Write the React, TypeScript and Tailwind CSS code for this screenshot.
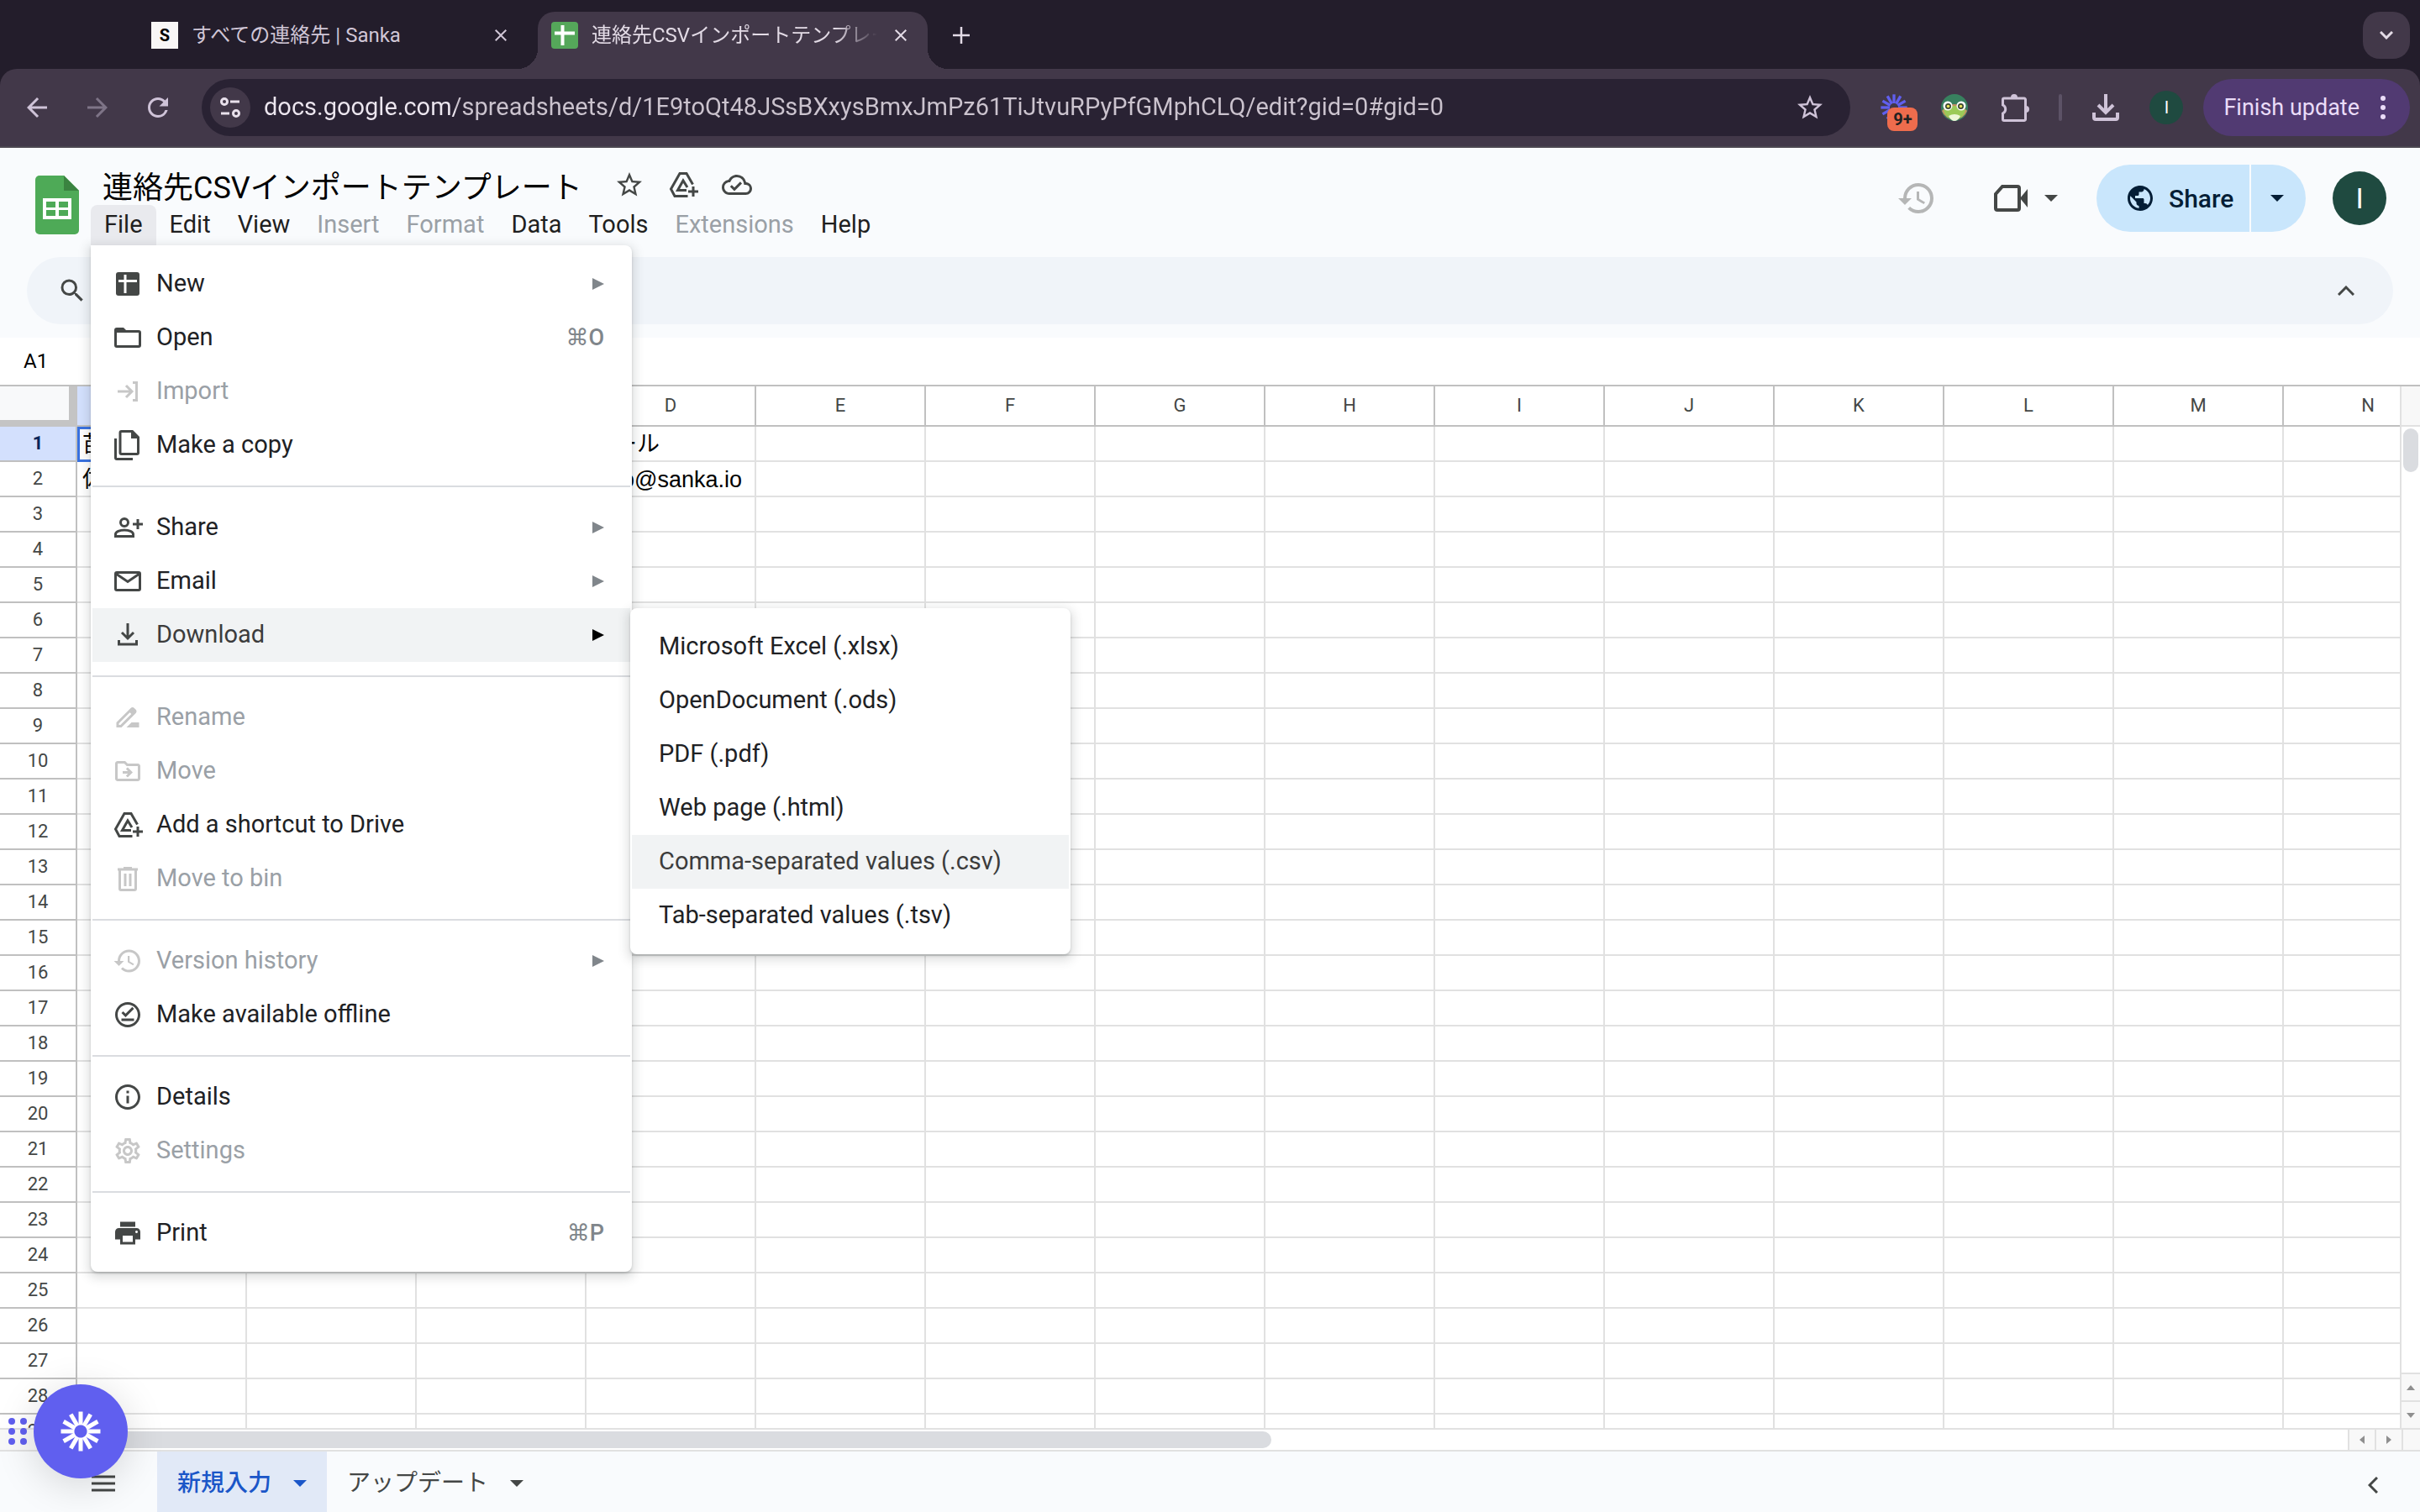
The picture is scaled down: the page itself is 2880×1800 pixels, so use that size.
import type { ReactNode } from 'react'
import {
  MdArrowBack,
  MdArrowForward,
  MdClose,
  MdDriveFileRenameOutline,
  MdHistory,
  MdInfoOutline,
  MdOutlineCloudDone,
  MdOutlineDriveFileMove,
  MdOutlineOfflinePin,
  MdOutlineSettings,
  MdPrint,
  MdPublic,
  MdRefresh,
  MdSearch,
  MdStarBorder,
} from 'react-icons/md'

const columns = ['A', 'B', 'C', 'D', 'E', 'F', 'G', 'H', 'I', 'J', 'K', 'L', 'M', 'N']
const rows = Array.from({ length: 29 }, (_, i) => i + 1)

const cells: Record<string, string> = {
  A1: '苗字',
  D1: 'メール',
  A2: '佐藤',
  D2: 'sato@sanka.io',
}

const menus = [
  { label: 'File', open: true },
  { label: 'Edit' },
  { label: 'View' },
  { label: 'Insert', disabled: true },
  { label: 'Format', disabled: true },
  { label: 'Data' },
  { label: 'Tools' },
  { label: 'Extensions', disabled: true },
  { label: 'Help' },
]

type Item = {
  label: string
  icon: ReactNode
  disabled?: boolean
  active?: boolean
  arrow?: boolean
  shortcut?: string
}

function Glyph({ children }: { children: ReactNode }) {
  return (
    <svg viewBox="0 0 36 36" className="size-9" fill="none" stroke="currentColor" strokeWidth="3">
      {children}
    </svg>
  )
}

function AddToDrive() {
  return (
    <Glyph>
      <path d="M29.500 17.500L22 4.500H14L3.500 23l4.500 8.500h15.500" />
      <path d="M22 24.500H11.500L18 13l5 8M24 26h12M30 20v12" />
    </Glyph>
  )
}

function Bin() {
  return (
    <Glyph>
      <path d="M8.500 8v22a1.500 1.500 0 0 0 1.500 1.500h16a1.500 1.500 0 0 0 1.500-1.500V8M6 7h24M13 5.500h10M15 12v15M21 12v15" />
    </Glyph>
  )
}

const fileMenu: Item[][] = [
  [
    {
      label: 'New',
      arrow: true,
      icon: (
        <Glyph>
          <rect x="4" y="4" width="28" height="28" rx="3" fill="currentColor" stroke="none" />
          <path d="M15 7v22M7 14.500h22" stroke="white" />
        </Glyph>
      ),
    },
    {
      label: 'Open',
      shortcut: '⌘O',
      icon: (
        <Glyph>
          <path d="M3.500 9v18a1.500 1.500 0 0 0 1.500 1.500h26a1.500 1.500 0 0 0 1.500-1.500V12a1.500 1.500 0 0 0-1.500-1.500H3.500" />
          <path d="M2 12V9a3 3 0 0 1 3-3h8l4 4v2z" fill="currentColor" stroke="none" />
        </Glyph>
      ),
    },
    {
      label: 'Import',
      disabled: true,
      icon: (
        <Glyph>
          <path d="M6 18h16M16 11l7 7-7 7M24 7.500h4.500v21H24" />
        </Glyph>
      ),
    },
    {
      label: 'Make a copy',
      icon: (
        <Glyph>
          <path d="M10.500 1.500h13l7 7V27a1.500 1.500 0 0 1-1.500 1.500H10.500A1.500 1.500 0 0 1 9 27V3a1.500 1.500 0 0 1 1.500-1.500z" />
          <path d="M22 0v10h10z" fill="currentColor" stroke="none" />
          <path d="M3.500 10v23a1.500 1.500 0 0 0 1.500 1.500h19" />
        </Glyph>
      ),
    },
  ],
  [
    {
      label: 'Share',
      arrow: true,
      icon: (
        <Glyph>
          <circle cx="14" cy="12" r="4.500" />
          <path d="M3.500 28.500v-2.500c0-3 5-5 10.500-5s10.500 2 10.500 5v2.500zM24 14h12M30 8v12" />
        </Glyph>
      ),
    },
    {
      label: 'Email',
      arrow: true,
      icon: (
        <Glyph>
          <rect x="3.500" y="7.500" width="29" height="21" rx="1.500" />
          <path d="M4 9l14 9.500L32 9" />
        </Glyph>
      ),
    },
    {
      label: 'Download',
      arrow: true,
      active: true,
      icon: (
        <Glyph>
          <path d="M18 4v17M11 15l7 7 7-7M7.500 24v5h21v-5" />
        </Glyph>
      ),
    },
  ],
  [
    { label: 'Rename', disabled: true, icon: <MdDriveFileRenameOutline className="size-9" /> },
    { label: 'Move', disabled: true, icon: <MdOutlineDriveFileMove className="size-9" /> },
    { label: 'Add a shortcut to Drive', icon: <AddToDrive /> },
    { label: 'Move to bin', disabled: true, icon: <Bin /> },
  ],
  [
    { label: 'Version history', disabled: true, arrow: true, icon: <MdHistory className="size-9" /> },
    { label: 'Make available offline', icon: <MdOutlineOfflinePin className="size-[38px]" /> },
  ],
  [
    { label: 'Details', icon: <MdInfoOutline className="size-[38px]" /> },
    { label: 'Settings', disabled: true, icon: <MdOutlineSettings className="size-[38px]" /> },
  ],
  [{ label: 'Print', shortcut: '⌘P', icon: <MdPrint className="size-[38px]" /> }],
]

const downloadMenu = [
  'Microsoft Excel (.xlsx)',
  'OpenDocument (.ods)',
  'PDF (.pdf)',
  'Web page (.html)',
  'Comma-separated values (.csv)',
  'Tab-separated values (.tsv)',
]

function Caret() {
  return (
    <svg viewBox="0 0 16 8" className="h-2 w-4" fill="currentColor">
      <path d="M0 0h16L8 8z" />
    </svg>
  )
}

function Burst({ className }: { className: string }) {
  return (
    <svg viewBox="-24 -24 48 48" className={className} stroke="currentColor" strokeWidth="5">
      {Array.from({ length: 12 }, (_, i) => (
        <path key={i} d="M0-7.500V-23.500" transform={`rotate(${i * 30})`} />
      ))}
    </svg>
  )
}

function SheetsLogo() {
  return (
    <svg viewBox="0 0 52 70" className="h-[70px] w-[52px]">
      <path d="M5 0h29l18 18v47a5 5 0 0 1-5 5H5a5 5 0 0 1-5-5V5a5 5 0 0 1 5-5z" fill="#4eaa57" />
      <path d="M34 0l18 18H34z" fill="#3a8340" />
      <path d="M9 27h34v25H9z" fill="white" />
      <path d="M13 31h11v7H13zM28 31h11v7H28zM13 41h11v7H13zM28 41h11v7H28z" fill="#4eaa57" />
    </svg>
  )
}

function Frog() {
  return (
    <svg viewBox="0 0 32 32" className="size-8">
      <circle cx="16" cy="16" r="16" fill="#38815f" />
      <path d="M1 20q15-16 30 0a16 16 0 0 1-30 0z" fill="#c98f62" />
      <path d="M3 19q13-10 26 0c-1 6-5 11-13 11S4 25 3 19z" fill="#9bca58" />
      <path d="M9 26q7-4 14 0-3 6-7 6t-7-6z" fill="#edf7d8" />
      <circle cx="8" cy="14" r="5.500" fill="white" />
      <circle cx="24" cy="14" r="5.500" fill="white" />
      <circle cx="8.500" cy="14.500" r="3.500" fill="#3c4a32" />
      <circle cx="23.500" cy="14.500" r="3.500" fill="#3c4a32" />
      <circle cx="8.500" cy="14.500" r="1.800" fill="#e8e25a" />
      <circle cx="23.500" cy="14.500" r="1.800" fill="#e8e25a" />
    </svg>
  )
}

function TabStrip() {
  return (
    <div className="flex h-[82px] items-end bg-[#231d2b] pl-[164px] text-2xl text-[#e3dbe6]">
      <div className="flex h-[68px] w-[464px] items-center gap-4 pb-3 pl-4 pr-5 text-[#d0c6d6]">
        <span className="flex size-8 items-center justify-center bg-[#f8f6f6] text-xl font-bold text-black">S</span>
        <span className="min-w-0 flex-1 truncate">すべての連絡先 | Sanka</span>
        <button aria-label="Close tab">
          <MdClose className="size-6" />
        </button>
      </div>
      <div className="relative ml-3 flex h-[68px] w-[464px] items-center gap-4 rounded-t-[20px] bg-[#423849] pb-3 pl-4 pr-5">
        <span className="absolute -left-6 bottom-0 size-6 bg-[radial-gradient(circle_at_0_0,transparent_24px,#423849_24px)]" />
        <span className="absolute -right-6 bottom-0 size-6 bg-[radial-gradient(circle_at_100%_0,transparent_24px,#423849_24px)]" />
        <svg viewBox="0 0 32 32" className="size-8 shrink-0">
          <rect width="32" height="32" rx="4" fill="#55a75a" />
          <path d="M13.500 4v24M4 13.500h24" stroke="white" strokeWidth="4" />
        </svg>
        <span className="min-w-0 flex-1 overflow-hidden whitespace-nowrap [mask-image:linear-gradient(90deg,black_85%,transparent)]">
          連絡先CSVインポートテンプレート
        </span>
        <button aria-label="Close tab">
          <MdClose className="size-6" />
        </button>
      </div>
      <button aria-label="New tab" className="ml-3 flex h-[68px] w-14 items-center justify-center pb-3">
        <svg viewBox="0 0 24 24" className="size-6" stroke="currentColor" strokeWidth="2.500">
          <path d="M12 2v20M2 12h20" />
        </svg>
      </button>
      <button aria-label="Search tabs" className="mb-3 ml-auto mr-3 flex size-14 items-center justify-center rounded-[20px] bg-[#423849]">
        <svg viewBox="0 0 16 10" className="h-[10px] w-4" fill="none" stroke="currentColor" strokeWidth="3">
          <path d="M1 1l7 7 7-7" />
        </svg>
      </button>
    </div>
  )
}

function AddressBar() {
  const slot = 'flex h-14 w-[72px] items-center justify-center'
  return (
    <div className="bg-[#231d2b]">
      <div className="flex h-[94px] items-center rounded-t-[20px] border-b-2 border-[#4c4751] bg-[#423849] pl-2 pr-3 text-[#cfc3d8]">
        <button aria-label="Back" className={slot}>
          <MdArrowBack className="size-9" />
        </button>
        <button aria-label="Forward" className={`${slot} text-[#7e7487]`}>
          <MdArrowForward className="size-9" />
        </button>
        <button aria-label="Reload" className={slot}>
          <MdRefresh className="size-9" />
        </button>
        <div className="mx-4 flex h-[68px] flex-1 items-center rounded-full bg-[#292233] pl-[10px] pr-[30px]">
          <button aria-label="Site information" className="flex size-12 items-center justify-center rounded-full bg-[#423849] text-[#e9e1ec]">
            <svg viewBox="0 0 28 28" className="size-7" fill="none" stroke="currentColor" strokeWidth="3">
              <circle cx="7" cy="7" r="3.500" />
              <path d="M14 7h11M3 21h10" />
              <circle cx="21" cy="21" r="3.500" />
            </svg>
          </button>
          <input
            aria-label="Address"
            className="ml-4 min-w-0 flex-1 bg-[linear-gradient(90deg,#ece6ef_228px,#cbc3ce_228px)] bg-clip-text text-[29px] text-transparent outline-none"
            defaultValue="docs.google.com/spreadsheets/d/1E9toQt48JSsBXxysBmxJmPz61TiJtvuRPyPfGMphCLQ/edit?gid=0#gid=0"
          />
          <button aria-label="Bookmark this tab">
            <MdStarBorder className="size-9" />
          </button>
        </div>
        <button aria-label="Notifications" className={`${slot} relative`}>
          <Burst className="size-8 text-[#605fef]" />
          <span className="absolute left-7 top-7 flex h-7 w-9 items-center justify-center rounded-lg bg-[#ee6c4d] text-xl font-bold text-[#222]">
            9+
          </span>
        </button>
        <button aria-label="Frog" className={slot}>
          <Frog />
        </button>
        <button aria-label="Extensions" className={slot}>
          <svg viewBox="0 0 34 34" className="size-[34px]" fill="none" stroke="currentColor" strokeWidth="3">
            <path d="M4 6h24a1.500 1.500 0 0 1 1.500 1.500V31A1.500 1.500 0 0 1 28 32.500H4A1.500 1.500 0 0 1 2.500 31v-7a5.500 5.500 0 0 0 0-10V7.500A1.500 1.500 0 0 1 4 6z" />
            <path d="M12 5a4 4 0 0 1 8 0zM30 15a4 4 0 0 1 0 8z" fill="currentColor" stroke="none" />
          </svg>
        </button>
        <span className="mx-4 h-8 w-1 rounded-full bg-[#5c5266]" />
        <button aria-label="Downloads" className={slot}>
          <svg viewBox="0 0 32 32" className="size-8" fill="none" stroke="currentColor" strokeWidth="4">
            <path d="M16 0v21M7 13l9 9 9-9M2 22v6a2 2 0 0 0 2 2h24a2 2 0 0 0 2-2v-6" />
          </svg>
        </button>
        <button aria-label="Profile" className={slot}>
          <span className="flex size-10 items-center justify-center rounded-full bg-[#1f4a40] text-xl text-white">I</span>
        </button>
        <button className="ml-2 flex h-[68px] items-center gap-6 rounded-full bg-[#513a72] pl-6 pr-7 text-[27px] text-[#eadcf8]">
          Finish update
          <svg viewBox="0 0 8 28" className="h-7 w-2" fill="currentColor">
            <circle cx="4" cy="3" r="3" />
            <circle cx="4" cy="14" r="3" />
            <circle cx="4" cy="25" r="3" />
          </svg>
        </button>
      </div>
    </div>
  )
}

function FileMenu() {
  return (
    <div className="absolute left-0 top-full z-20 w-[644px] rounded-b-lg rounded-tr-lg bg-white px-[2px] py-[14px] shadow-[0_4px_12px_4px_rgba(60,64,67,0.15),0_2px_3px_rgba(60,64,67,0.2)]">
      {fileMenu.map((group, g) => (
        <div key={g} className={g > 0 ? 'mt-4 border-t-2 border-[#dadce0] pt-4' : ''}>
          {group.map((item) => (
            <div key={item.label} className="relative">
              <button
                disabled={item.disabled}
                className={`flex h-16 w-full items-center pl-6 pr-[31px] text-[29px] ${
                  item.active ? 'bg-[#f1f3f4] text-[#3c3c3c]' : item.disabled ? 'text-[#9aa0a6]' : 'text-[#202124]'
                }`}
              >
                <span className={`mr-4 flex size-9 items-center justify-center ${item.disabled ? 'text-[#c7c7c7]' : 'text-[#444746]'}`}>
                  {item.icon}
                </span>
                {item.label}
                {item.shortcut && (
                  <span className="ml-auto font-[Roboto,'DejaVu_Sans',sans-serif] text-[27px] font-medium text-[#80868b]">
                    {item.shortcut}
                  </span>
                )}
                {item.arrow && (
                  <svg
                    viewBox="0 0 14 14"
                    className={`ml-auto size-[14px] ${item.active ? 'text-black' : 'text-[#80868b]'}`}
                    fill="currentColor"
                  >
                    <path d="M0 0l14 7-14 7z" />
                  </svg>
                )}
              </button>
              {item.active && <DownloadMenu />}
            </div>
          ))}
        </div>
      ))}
    </div>
  )
}

function DownloadMenu() {
  return (
    <div className="absolute left-full top-0 z-30 w-[524px] rounded-lg bg-white px-[2px] py-[14px] shadow-[0_4px_12px_4px_rgba(60,64,67,0.15),0_2px_3px_rgba(60,64,67,0.2)]">
      {downloadMenu.map((label, i) => (
        <button
          key={label}
          className={`flex h-16 w-full items-center px-8 text-[29px] ${i === 4 ? 'bg-[#f1f3f4] text-[#3c3c3c]' : 'text-[#202124]'}`}
        >
          {label}
        </button>
      ))}
    </div>
  )
}

function DocHeader() {
  return (
    <header className="bg-[#f9fbfd] pb-4 pt-5 text-[#444746]">
      <div className="flex pl-[42px] pr-10">
        <a href="#home" aria-label="Sheets home" className="self-center">
          <SheetsLogo />
        </a>
        <div className="ml-[14px]">
          <div className="flex h-12 items-center">
            <input
              aria-label="Document title"
              className="ml-[14px] h-11 bg-transparent text-4xl leading-10 text-black outline-none [field-sizing:content]"
              defaultValue="連絡先CSVインポートテンプレート"
            />
            <div className="ml-[38px] flex gap-7">
              <button aria-label="Star">
                <MdStarBorder className="size-9" />
              </button>
              <button aria-label="Add shortcut to Drive">
                <AddToDrive />
              </button>
              <button aria-label="Saved to Drive">
                <MdOutlineCloudDone className="size-9" />
              </button>
            </div>
          </div>
          <nav className="flex">
            {menus.map((m) => (
              <div key={m.label} className="relative">
                <button
                  disabled={m.disabled}
                  className={`h-12 rounded-t-lg px-4 text-[29px] ${m.open ? 'bg-[#e9eaee]' : ''} ${m.disabled ? 'text-[#9aa0a6]' : 'text-[#1f1f1f]'}`}
                >
                  {m.label}
                </button>
                {m.open && <FileMenu />}
              </div>
            ))}
          </nav>
        </div>
        <div className="ml-auto flex h-20 items-center">
          <button aria-label="Version history" className="text-[#b5b6b6]">
            <MdHistory className="size-12" />
          </button>
          <button aria-label="Join a call" className="ml-[68px] flex items-center gap-5">
            <svg viewBox="0 0 40 32" className="h-8 w-10" fill="none" stroke="currentColor" strokeWidth="4">
              <path d="M10 2h18a2 2 0 0 1 2 2v24a2 2 0 0 1-2 2H4a2 2 0 0 1-2-2V11z" />
              <path d="M31 16l9-11v22z" fill="currentColor" stroke="none" />
            </svg>
            <Caret />
          </button>
          <div className="ml-[46px] flex h-20 gap-[2px] text-[#041e36]">
            <button className="flex w-[182px] items-center gap-4 rounded-l-full bg-[#c9e6fc] pl-[34px] text-[30px] font-medium">
              <MdPublic className="size-9" />
              Share
            </button>
            <button aria-label="Quick sharing" className="flex w-[65px] items-center rounded-r-full bg-[#c9e6fc] pl-[23px]">
              <Caret />
            </button>
          </div>
          <button aria-label="Account" className="ml-8 size-16 rounded-full bg-[#1f4a40] text-[34px] text-white">
            I
          </button>
        </div>
      </div>
      <div className="mx-8 mt-[14px] flex h-20 items-center justify-between rounded-full bg-[#f0f4f9] px-9">
        <button aria-label="Search the menus">
          <MdSearch className="size-9" />
        </button>
        <button aria-label="Hide the menus" className="mr-[10px]">
          <svg viewBox="0 0 20 12" className="h-3 w-5" fill="none" stroke="currentColor" strokeWidth="3">
            <path d="M1 11l9-9 9 9" />
          </svg>
        </button>
      </div>
    </header>
  )
}

function Grid() {
  return (
    <table className="w-[2920px] table-fixed border-separate border-spacing-0">
      <thead>
        <tr className="h-12 text-[22px] text-[#444746]">
          <th className="w-[92px] border-b-8 border-r-[10px] border-[#c4c4c4] bg-[#f8f9fa]" />
          {columns.map((c) => (
            <th
              key={c}
              className={`w-[202px] border-b-2 border-r-2 border-[#c0c0c0] p-0 pb-[2px] font-normal ${c === 'A' ? 'bg-[#d3e0fd]' : ''}`}
            >
              {c}
            </th>
          ))}
        </tr>
      </thead>
      <tbody>
        {rows.map((r) => (
          <tr key={r} className="h-[42px]">
            <th
              className={`border-b-2 border-r-2 border-[#c0c0c0] p-0 text-[22px] leading-9 ${
                r === 1 ? 'bg-[#d3e0fd] font-bold text-[#0b2559]' : 'font-normal text-[#444746]'
              }`}
            >
              {r}
            </th>
            {columns.map((c) => (
              <td
                key={c}
                className={`whitespace-nowrap border-b-2 border-r-2 border-[#e1e1e1] p-0 pl-[6px] pt-[2px] font-['Liberation_Sans','Noto_Sans_CJK_JP',sans-serif] text-[27px] leading-9 text-black ${
                  c + r === 'A1' ? 'outline-3 -outline-offset-3 outline-[#3871e0]' : ''
                }`}
              >
                {cells[c + r]}
              </td>
            ))}
          </tr>
        ))}
      </tbody>
    </table>
  )
}

function ScrollArrow({ label, d }: { label: string; d: string }) {
  return (
    <button aria-label={label} className="flex flex-1 items-center justify-center border-[#e1e1e1] bg-[#f8f8f8]">
      <svg viewBox="0 0 12 12" className="size-3" fill="#8f8f8f">
        <path d={d} />
      </svg>
    </button>
  )
}

function SheetTabs() {
  return (
    <footer className="flex h-[72px] items-stretch bg-[#f9fbfd] pl-[106px] pr-[50px] text-[28px] text-[#444746]">
      <button aria-label="All sheets" className="flex w-[34px] items-center justify-center pt-1">
        <svg viewBox="0 0 28 20" className="h-5 w-7" stroke="currentColor" strokeWidth="3">
          <path d="M0 2h28M0 10h28M0 18h28" />
        </svg>
      </button>
      <button className="ml-[47px] flex items-center gap-[26px] bg-[#e1e9f7] px-6 pt-1 font-medium text-[#1a56c8]">
        新規入力
        <Caret />
      </button>
      <button className="flex items-center gap-[26px] px-6 pt-1">
        アップデート
        <Caret />
      </button>
      <button aria-label="Show side panel" className="ml-auto pt-2">
        <svg viewBox="0 0 12 20" className="h-5 w-3" fill="none" stroke="currentColor" strokeWidth="3">
          <path d="M11 1l-9 9 9 9" />
        </svg>
      </button>
    </footer>
  )
}

export default function App() {
  return (
    <div className="relative flex h-screen flex-col overflow-hidden bg-white font-[Roboto,'Noto_Sans_CJK_JP',sans-serif]">
      <TabStrip />
      <AddressBar />
      <DocHeader />
      <div className="flex h-[58px] shrink-0 items-center border-b-2 border-[#c0c0c0] pl-7">
        <input aria-label="Name box" className="w-20 text-2xl text-black outline-none" defaultValue="A1" />
      </div>
      <main className="flex min-h-0 flex-1">
        <div className="min-w-0 flex-1 overflow-hidden">
          <Grid />
        </div>
        <div className="flex w-6 flex-col border-l-2 border-[#e1e1e1]">
          <div className="h-12 border-b-2 border-[#e1e1e1] bg-[#f8f8f8]" />
          <div className="mx-[2px] mt-[2px] h-[52px] rounded-full bg-[#dadce0]" />
          <div className="mt-auto flex h-[66px] flex-col divide-y-2 border-t-2 border-[#e1e1e1]">
            <ScrollArrow label="Scroll up" d="M1 9h10L6 3z" />
            <ScrollArrow label="Scroll down" d="M1 3h10L6 9z" />
          </div>
        </div>
      </main>
      <div className="flex h-7 shrink-0 border-y-2 border-[#e1e1e1]">
        <div className="w-[92px] bg-[#f8f8f8]" />
        <div className="flex-1 py-[2px]">
          <div className="h-full w-[1421px] rounded-r-full bg-[#dadce0]" />
        </div>
        <div className="flex w-[66px] divide-x-2 border-x-2 border-[#e1e1e1]">
          <ScrollArrow label="Scroll left" d="M9 1v10L3 6z" />
          <ScrollArrow label="Scroll right" d="M3 1v10l6-5z" />
        </div>
        <div className="w-5 bg-[#f8f8f8]" />
      </div>
      <SheetTabs />
      <div className="absolute bottom-10 left-[10px] z-40 flex items-center gap-2">
        <svg viewBox="0 0 22 32" className="h-8 w-[22px]" fill="#605fef">
          <circle cx="4" cy="4" r="4" />
          <circle cx="4" cy="16" r="4" />
          <circle cx="4" cy="28" r="4" />
          <circle cx="18" cy="4" r="4" />
          <circle cx="18" cy="16" r="4" />
          <circle cx="18" cy="28" r="4" />
        </svg>
        <button
          aria-label="Open assistant"
          className="flex size-28 items-center justify-center rounded-full bg-[#605fef] text-white shadow-[0_8px_48px_rgba(0,0,0,0.15)]"
        >
          <Burst className="size-12" />
        </button>
      </div>
    </div>
  )
}
